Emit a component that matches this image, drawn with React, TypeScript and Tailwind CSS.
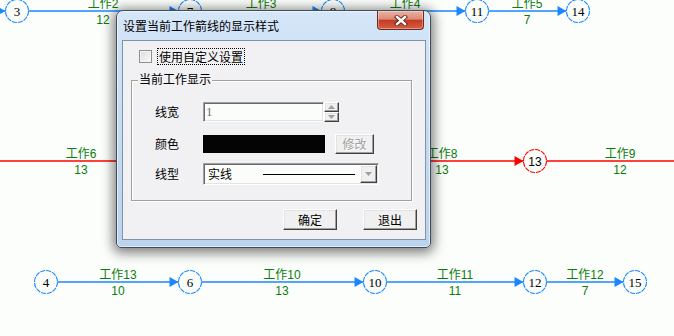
import React from "react"

const BLUE = "#1a86ff"
const GREEN = "#0a7d0a"
const RED = "#ff0000"
const BG = "#fcfefc"
const R = 11.5

type Node = { x: number; y: number; n: string; red?: boolean }
type Label = { x: number; y: number; name: string; dur?: string }

const nodes: Node[] = [
  { x: 17, y: 11, n: "3" },
  { x: 190, y: 11, n: "7" },
  { x: 333, y: 11, n: "8" },
  { x: 477, y: 11, n: "11" },
  { x: 578, y: 11, n: "14" },
  { x: 535, y: 161, n: "13", red: true },
  { x: 46, y: 282, n: "4" },
  { x: 190, y: 282, n: "6" },
  { x: 375, y: 282, n: "10" },
  { x: 535, y: 282, n: "12" },
  { x: 635, y: 282, n: "15" },
]

const labels: Label[] = [
  { x: 103, y: 11, name: "工作2", dur: "12" },
  { x: 261, y: 11, name: "工作3" },
  { x: 405, y: 11, name: "工作4" },
  { x: 527, y: 11, name: "工作5", dur: "7" },
  { x: 81, y: 161, name: "工作6", dur: "13" },
  { x: 442, y: 161, name: "工作8", dur: "13" },
  { x: 620, y: 161, name: "工作9", dur: "12" },
  { x: 118, y: 282, name: "工作13", dur: "10" },
  { x: 282, y: 282, name: "工作10", dur: "13" },
  { x: 455, y: 282, name: "工作11", dur: "11" },
  { x: 585, y: 282, name: "工作12", dur: "7" },
]

function Arrow({ x, y, color }: { x: number; y: number; color: string }) {
  const t = x - R
  return <polygon points={`${t},${y} ${t - 9},${y - 5} ${t - 9},${y + 5}`} fill={color} />
}

function Diagram() {
  return (
    <svg className="absolute inset-0" width={674} height={336}>
      <line x1={0} y1={11} x2={566} y2={11} stroke={BLUE} strokeWidth={1.5} />
      <line x1={46} y1={282} x2={623} y2={282} stroke={BLUE} strokeWidth={1.5} />
      <line x1={0} y1={161} x2={674} y2={161} stroke={RED} strokeWidth={1.5} />
      {nodes
        .filter((d) => d.n !== "4")
        .map((d) => (
          <Arrow key={"a" + d.n} x={d.x} y={d.y} color={d.red ? RED : BLUE} />
        ))}
      {nodes.map((d) => (
        <g key={d.n}>
          <circle cx={d.x} cy={d.y} r={R} fill={BG} stroke={d.red ? RED : BLUE} strokeWidth={1.1} strokeDasharray="5 1" />
          <text
            x={d.x}
            y={d.y + 4.5}
            textAnchor="middle"
            fontSize={d.red ? 12 : 13}
            fontFamily={d.red ? "'Liberation Sans', sans-serif" : "'Liberation Serif', serif"}
            fill="#000"
          >
            {d.n}
          </text>
        </g>
      ))}
      {labels.map((l) => (
        <g key={l.name} fill={GREEN} fontFamily="'Liberation Sans', 'Noto Sans CJK SC', sans-serif" fontSize={12}>
          <text x={l.x} y={l.y - 3} textAnchor="middle">
            {l.name}
          </text>
          {l.dur && (
            <text x={l.x} y={l.y + 13} textAnchor="middle">
              {l.dur}
            </text>
          )}
        </g>
      ))}
    </svg>
  )
}

const raised =
  "border border-t-white border-l-white border-r-[#404040] border-b-[#404040] bg-[#f0f0f0] shadow-[inset_-1px_-1px_0_#a0a0a0,inset_1px_1px_0_#e3e3e3]"
const sunken =
  "border border-t-[#a0a0a0] border-l-[#a0a0a0] border-r-white border-b-white bg-[#fbfdfb] shadow-[inset_1px_1px_0_#696969,inset_-1px_-1px_0_#e3e3e3]"

function Tri({ up }: { up?: boolean }) {
  return (
    <svg width="7" height="4" viewBox="0 0 7 4">
      <polygon points={up ? "3.5,0 0,4 7,4" : "0,0 7,0 3.5,4"} fill="#a0a0a0" />
    </svg>
  )
}

function Dialog() {
  return (
    <div className="absolute left-[116px] top-[10px] w-[315px] h-[238px] flex flex-col rounded-t-[7px] rounded-b-[5px] border border-[#3f4c5a] bg-gradient-to-b from-[#d5e6f8] via-[#c5dbf2] to-[#bcd3ed] shadow-[0_2px_12px_3px_rgba(0,0,0,0.5),inset_0_0_0_1px_rgba(255,255,255,0.55)] font-['Noto_Sans_CJK_SC',sans-serif] text-[12px] text-black">
      <div className="h-[29px] flex justify-between pl-[6px] pr-[6px]">
        <span className="self-center leading-none pt-[1px]">设置当前工作箭线的显示样式</span>
        <div className="w-[47px] h-[19px] rounded-b-[4px] border border-t-0 border-[#6e2a1e] bg-[linear-gradient(to_bottom,#ebb1a4_0%,#dc8a76_45%,#c43b22_52%,#d65f43_100%)] flex items-center justify-center shadow-[inset_0_0_0_1px_rgba(255,255,255,0.35)]">
          <svg width="14" height="11" viewBox="0 0 14 11">
            <path d="M3 2 L11 9 M11 2 L3 9" stroke="#5a2218" strokeWidth="4.2" strokeLinecap="square" />
            <path d="M3 2 L11 9 M11 2 L3 9" stroke="#fff" strokeWidth="2.4" strokeLinecap="square" />
          </svg>
        </div>
      </div>
      <div className="pl-[5px] pr-[4px]">
        <div className="w-[304px] h-[200px] border border-[#7f93a8] bg-[#f1f0f3] flex flex-col">
          <div className="mt-[7px] ml-[16px] h-[17px] flex items-center">
            <div className="w-[13px] h-[13px] border border-[#8e8f8f] bg-gradient-to-br from-[#dcdcdc] to-[#fafafa] shadow-[inset_0_0_0_1px_#f4f4f4]" />
            <span className="ml-[5px] h-[17px] px-[1px] border border-dotted border-black flex items-center leading-none">
              使用自定义设置
            </span>
          </div>
          <div className="relative mt-[15px] ml-[8px] w-[281px] h-[121px] border border-[#a0a0a0] shadow-[inset_1px_1px_0_#fff,1px_1px_0_#fff] flex flex-col">
            <span className="absolute -top-[8px] left-[6px] px-[1px] bg-[#f1f0f3] leading-none">当前工作显示</span>
            <div className="mt-[21px] h-[20px] flex items-center">
              <span className="pl-[23px] w-[71px] leading-none">线宽</span>
              <div className={`w-[121px] h-[20px] ${sunken} flex items-center pl-[2px] text-[#707070] font-['Liberation_Serif',serif] text-[13px]`}>
                1
              </div>
              <div className="flex flex-col">
                <div className={`w-[15px] h-[10px] ${raised} flex items-center justify-center`}>
                  <Tri up />
                </div>
                <div className={`w-[15px] h-[10px] ${raised} flex items-center justify-center`}>
                  <Tri />
                </div>
              </div>
            </div>
            <div className="mt-[12px] h-[20px] flex items-center">
              <span className="pl-[23px] w-[71px] leading-none">颜色</span>
              <div className="w-[122px] h-[18px] bg-[#040404]" />
              <div className={`ml-[10px] w-[39px] h-[20px] ${raised} flex items-center justify-center text-[#a0a0a0] [text-shadow:1px_1px_0_#fff]`}>
                修改
              </div>
            </div>
            <div className="mt-[9px] h-[22px] flex items-center">
              <span className="pl-[23px] w-[71px] leading-none">线型</span>
              <div className={`w-[176px] h-[22px] ${sunken} flex items-center pl-[4px] pr-[1px]`}>
                <span className="leading-none">实线</span>
                <div className="ml-[31px] w-[92px] h-[1px] bg-black" />
                <div className={`ml-auto w-[17px] h-[18px] ${raised} flex items-center justify-center`}>
                  <Tri />
                </div>
              </div>
            </div>
          </div>
          <div className="mt-[8px] pr-[8px] flex justify-end gap-[26px]">
            <button className={`w-[54px] h-[21px] ${raised} flex items-center justify-center`}>确定</button>
            <button className={`w-[54px] h-[21px] ${raised} flex items-center justify-center`}>退出</button>
          </div>
        </div>
      </div>
    </div>
  )
}

export default function App() {
  return (
    <div className="relative w-[674px] h-[336px] overflow-hidden bg-[#fcfefc]">
      <Diagram />
      <Dialog />
    </div>
  )
}
